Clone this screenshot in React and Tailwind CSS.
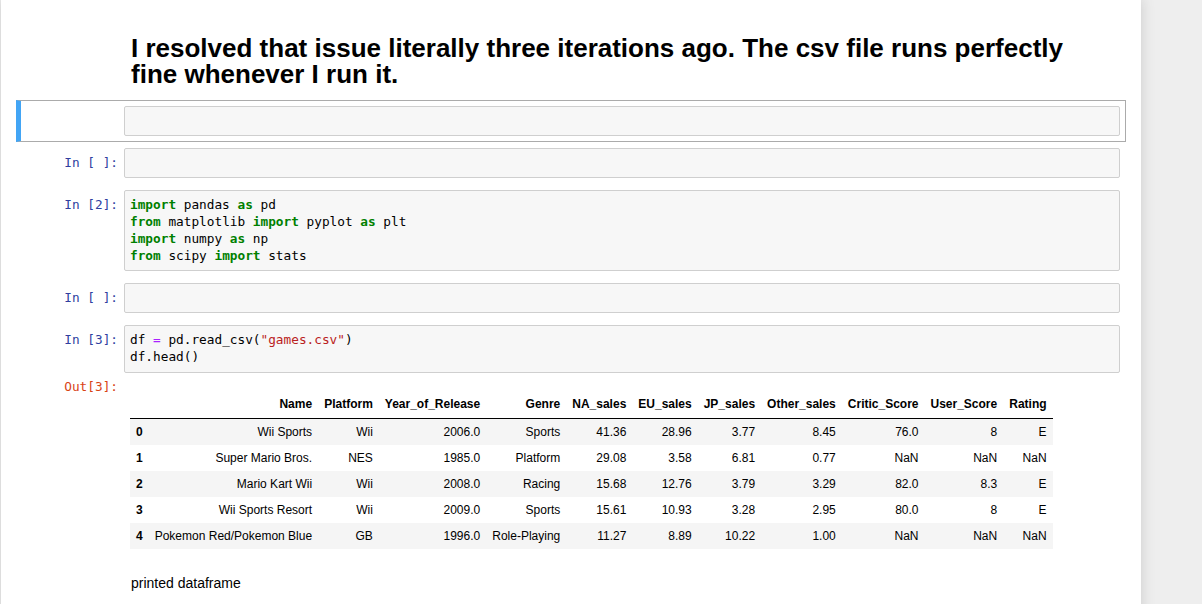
import React from "react";

const columns = [
  "Name",
  "Platform",
  "Year_of_Release",
  "Genre",
  "NA_sales",
  "EU_sales",
  "JP_sales",
  "Other_sales",
  "Critic_Score",
  "User_Score",
  "Rating",
];

const rows = [
  ["Wii Sports", "Wii", "2006.0", "Sports", "41.36", "28.96", "3.77", "8.45", "76.0", "8", "E"],
  ["Super Mario Bros.", "NES", "1985.0", "Platform", "29.08", "3.58", "6.81", "0.77", "NaN", "NaN", "NaN"],
  ["Mario Kart Wii", "Wii", "2008.0", "Racing", "15.68", "12.76", "3.79", "3.29", "82.0", "8.3", "E"],
  ["Wii Sports Resort", "Wii", "2009.0", "Sports", "15.61", "10.93", "3.28", "2.95", "80.0", "8", "E"],
  ["Pokemon Red/Pokemon Blue", "GB", "1996.0", "Role-Playing", "11.27", "8.89", "10.22", "1.00", "NaN", "NaN", "NaN"],
];

const Kw = ({ children }) => <span className="text-[#008000] font-bold">{children}</span>;

function Prompt({ label, out }) {
  return (
    <div
      className={`w-[102px] shrink-0 pr-[6px] text-right font-['DejaVu_Sans_Mono',monospace] text-[12.75px] leading-[17px] pt-[6px] ${
        out ? "text-[#d84315]" : "text-[#303f9f]"
      }`}
    >
      {label}
    </div>
  );
}

function CodeCell({ label, children }) {
  return (
    <div className="flex border border-transparent p-[5px]">
      <Prompt label={label} />
      <div className="flex-1 min-h-[30px] rounded-[2px] border border-[#cfcfcf] bg-[#f7f7f7] pl-[5px] pt-[5px] pb-[6px] font-['DejaVu_Sans_Mono',monospace] text-[12.75px] leading-[17px] text-black whitespace-pre">
        {children}
      </div>
    </div>
  );
}

export default function App() {
  return (
    <div className="min-h-screen bg-[#eeeeee] font-['Liberation_Sans',Arial,sans-serif]">
      <div className="ml-px w-[1140px] min-h-screen bg-white px-[15px] pt-[28px] pb-10 shadow-[0_0_12px_1px_rgba(87,87,87,0.2)]">
        {/* markdown heading */}
        <div className="flex p-[6px]">
          <div className="w-[102px] shrink-0" />
          <h1 className="flex-1 pl-[7px] pr-10 text-[26px] leading-[26px] font-bold text-black mt-px mb-[7px]">
            I resolved that issue literally three iterations ago. The csv file runs perfectly fine whenever I run it.
          </h1>
        </div>

        {/* selected empty cell */}
        <div className="flex border border-[#ababab] border-l-[5px] border-l-[#42a5f5] py-[5px] pr-[5px] pl-px">
          <div className="w-[102px] shrink-0" />
          <div className="flex-1 h-[30px] rounded-[2px] border border-[#cfcfcf] bg-[#f7f7f7]" />
        </div>

        <CodeCell label="In [ ]:" />

        <CodeCell label="In [2]:">
          <Kw>import</Kw> pandas <Kw>as</Kw> pd{"\n"}
          <Kw>from</Kw> matplotlib <Kw>import</Kw> pyplot <Kw>as</Kw> plt{"\n"}
          <Kw>import</Kw> numpy <Kw>as</Kw> np{"\n"}
          <Kw>from</Kw> scipy <Kw>import</Kw> stats
        </CodeCell>

        <CodeCell label="In [ ]:" />

        <div className="border border-transparent p-[5px]">
          <div className="flex">
            <Prompt label="In [3]:" />
            <div className="flex-1 rounded-[2px] border border-[#cfcfcf] bg-[#f7f7f7] pl-[5px] pt-[5px] pb-[7px] font-['DejaVu_Sans_Mono',monospace] text-[12.75px] leading-[17px] text-black whitespace-pre">
              df <span className="text-[#aa22ff]">=</span> pd.read_csv(<span className="text-[#ba2121]">"games.csv"</span>){"\n"}
              df.head()
            </div>
          </div>

          <div className="flex mt-[5px]">
            <div className="w-[102px] shrink-0 pr-[6px] text-right font-['DejaVu_Sans_Mono',monospace] text-[12.75px] leading-[17px] text-[#d84315]">
              Out[3]:
            </div>
            <div className="flex-1 pl-[6px] pt-[13px]">
              <table className="border-collapse text-[12px] leading-[14px] text-black">
                <thead className="border-b border-black">
                  <tr>
                    <th className="px-[6px] pt-[6px] pb-[7px]" />
                    {columns.map((c) => (
                      <th key={c} className="px-[6px] pt-[6px] pb-[7px] text-right font-bold">
                        {c}
                      </th>
                    ))}
                  </tr>
                </thead>
                <tbody>
                  {rows.map((r, i) => (
                    <tr key={i} className={i % 2 === 0 ? "bg-[#f5f5f5]" : "bg-white"}>
                      <th className="px-[6px] py-[6px] text-left font-bold">{i}</th>
                      {r.map((v, j) => (
                        <td key={j} className="px-[6px] py-[6px] text-right">
                          {v}
                        </td>
                      ))}
                    </tr>
                  ))}
                </tbody>
              </table>
            </div>
          </div>
        </div>

        {/* markdown note */}
        <div className="flex px-[6px] mt-[18px]">
          <div className="w-[102px] shrink-0" />
          <p className="flex-1 pl-[7px] text-[14px] leading-[20px] text-black">printed dataframe</p>
        </div>
      </div>
    </div>
  );
}
